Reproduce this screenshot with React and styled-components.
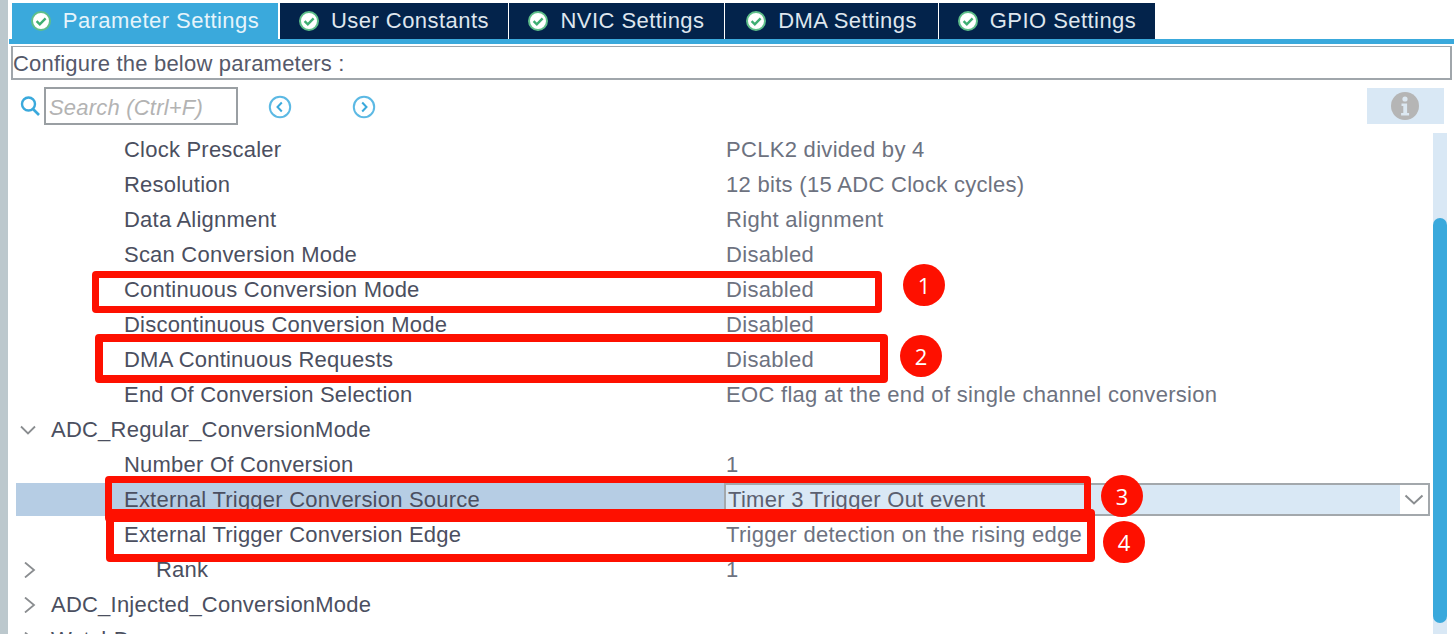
import React from "react";
import styled, { createGlobalStyle } from "styled-components";

const Global = createGlobalStyle`
  html, body { margin: 0; padding: 0; background: #fff; }
  body { font-family: "Liberation Sans", Arial, sans-serif; }
`;

const Page = styled.div`
  position: relative;
  width: 1454px;
  height: 634px;
  overflow: hidden;
  display: flex;
  background: #fff;
`;
const Gutter = styled.div`
  flex: 0 0 8px;
  background: #bcc8cd;
`;
const Main = styled.div`
  flex: 1;
  min-width: 0;
  display: flex;
  flex-direction: column;
  padding-top: 3px;
`;
const TabBar = styled.div`
  display: flex;
  height: 36px;
  padding-left: 4px;
  gap: 1px;
`;
const Tab = styled.div`
  width: ${(p) => p.$w}px;
  margin-right: ${(p) => p.$gap || 0}px;
  display: flex;
  align-items: center;
  justify-content: center;
  gap: 12px;
  box-sizing: border-box;
  background: ${(p) => (p.$active ? "#3aa9dc" : "#03234b")};
  color: ${(p) => (p.$active ? "#e6f4fb" : "#dfe6ee")};
  font-size: 22px;
  letter-spacing: 0.45px;
  white-space: nowrap;
`;
const Strip = styled.div`
  height: 5px;
  margin-left: 1px;
  background: #3aa9dc;
`;
const Configure = styled.div`
  height: 34px;
  margin: 2px 2px 0 3px;
  box-sizing: border-box;
  border: 2px solid #a0a6ab;
  border-top-width: 1px;
  padding: 3px 0 0;
  display: flex;
  align-items: center;
  color: #55596a;
  font-size: 22px;
  letter-spacing: 0.2px;
`;
const Toolbar = styled.div`
  height: 52px;
  display: flex;
  align-items: center;
  padding-left: 12px;
  padding-right: 10px;
`;
const SearchBox = styled.div`
  width: 194px;
  height: 38px;
  margin-left: 4px;
  box-sizing: border-box;
  border: 2px solid #9a9fa3;
  padding: 3px 0 0 3px;
  display: flex;
  align-items: center;
  color: #b3b3b3;
  font-size: 22px;
  font-style: italic;
  letter-spacing: .2px;
`;
const NavButton = styled.span`
  display: flex;
  margin-left: ${(p) => p.$ml}px;
  transform: translateY(1px);
`;
const InfoButton = styled.div`
  margin-left: auto;
  width: 77px;
  height: 36px;
  padding-right: 2px;
  box-sizing: border-box;
  display: flex;
  align-items: center;
  justify-content: center;
  background: #d9e8f5;
`;
const Tree = styled.div`
  position: relative;
  flex: 1;
  min-height: 0;
  padding-left: 8px;
`;
const Row = styled.div`
  height: 35px;
  display: flex;
  align-items: center;
  font-size: 22px;
  letter-spacing: 0.3px;
  white-space: nowrap;
`;
const Label = styled.div`
  flex: 0 0 708px;
  height: ${(p) => (p.$selected ? "33px" : "100%")};
  box-sizing: border-box;
  display: flex;
  align-items: center;
  padding-left: ${(p) => p.$indent}px;
  color: #4b4f60;
  letter-spacing: 0.22px;
  background: ${(p) => (p.$selected ? "#b6cde4" : "transparent")};
`;
const Twisty = styled.span`
  position: absolute;
  left: ${(p) => p.$x}px;
  display: flex;
`;
const Value = styled.div`
  padding-left: 2px;
  color: #6d7280;
`;
const Editor = styled.div`
  flex: 0 0 706px;
  height: 33px;
  box-sizing: border-box;
  border: 2px solid #a3a8ac;
  display: flex;
  align-items: stretch;
  color: #5b6070;
`;
const EditorText = styled.div`
  flex: 1;
  display: flex;
  align-items: center;
  padding-left: 2px;
  background: #d9e8f5;
`;
const EditorCaret = styled.div`
  flex: 0 0 28px;
  display: flex;
  align-items: center;
  justify-content: center;
  background: #fff;
`;
const ScrollTrack = styled.div`
  position: absolute;
  left: 1425px;
  top: 1px;
  bottom: 0;
  width: 14px;
  background: #d9e8f5;
`;
const ScrollThumb = styled.div`
  position: absolute;
  top: 85px;
  left: 0;
  width: 14px;
  height: 405px;
  border-radius: 7px;
  background: #3aa9dc;
`;
const Mark = styled.div`
  position: absolute;
  left: ${(p) => p.$l}px;
  top: ${(p) => p.$t}px;
  width: ${(p) => p.$w}px;
  height: ${(p) => p.$h}px;
  box-sizing: border-box;
  border: ${(p) => p.$s}px solid #fe1000;
  border-radius: 4px;
`;
const Badge = styled.div`
  position: absolute;
  left: ${(p) => p.$x - 21}px;
  top: ${(p) => p.$y - 21}px;
  width: 42px;
  height: 42px;
  border-radius: 50%;
  background: #fe1000;
  color: #fff;
  display: flex;
  align-items: center;
  justify-content: center;
  font-family: "Open Sans", sans-serif;
  font-size: 22px;
`;

const Check = () => (
  <svg width="20" height="20" viewBox="0 0 20 20">
    <circle cx="10" cy="10" r="9" fill="#fff" stroke="#5fbf8a" strokeWidth="2" />
    <path d="M5.6 10.2l3.2 3.2 5.8-6" fill="none" stroke="#3fae72" strokeWidth="2.4" />
  </svg>
);
const Search = () => (
  <svg width="20" height="22" viewBox="0 0 20 22">
    <circle cx="8.5" cy="9" r="6.5" fill="none" stroke="#3aa9dc" strokeWidth="2.4" />
    <path d="M13 14l6 6" stroke="#3aa9dc" strokeWidth="2.6" />
  </svg>
);
const Nav = ({ dir }) => (
  <svg width="24" height="24" viewBox="0 0 24 24">
    <circle cx="12" cy="12" r="10.2" fill="none" stroke="#5cb9e4" strokeWidth="2" />
    <path d={dir === "l" ? "M13.8 7.5L9.5 12l4.3 4.5" : "M10.2 7.5L14.5 12l-4.3 4.5"} fill="none" stroke="#3aa9dc" strokeWidth="2" />
  </svg>
);
const Info = () => (
  <svg width="28" height="28" viewBox="0 0 28 28">
    <circle cx="14" cy="14" r="14" fill="#b5b5b5" />
    <circle cx="14" cy="7" r="2.6" fill="#dce8f2" />
    <path d="M10.5 11.5h5.6V21h2v2.4h-8V21h2.2v-7h-1.8z" fill="#dce8f2" />
  </svg>
);
const Chevron = ({ open }) => (
  <svg width="16" height="16" viewBox="0 0 16 16">
    <path d={open ? "M1 4.5l7 7 7-7" : "M3 .5l9 7.5-9 7.5"} fill="none" stroke="#8a8d90" strokeWidth="1.8" />
  </svg>
);
const Caret = () => (
  <svg width="20" height="11" viewBox="0 0 20 11">
    <path d="M1.5 1.5L10 9.5l8.5-8" fill="none" stroke="#8a8d90" strokeWidth="2" />
  </svg>
);

const tabs = [
  { t: "Parameter Settings", w: 266, active: true, gap: 1 },
  { t: "User Constants", w: 228 },
  { t: "NVIC Settings", w: 215 },
  { t: "DMA Settings", w: 213 },
  { t: "GPIO Settings", w: 216 },
];
const rows = [
  { l: "Clock Prescaler", v: "PCLK2 divided by 4" },
  { l: "Resolution", v: "12 bits (15 ADC Clock cycles)" },
  { l: "Data Alignment", v: "Right alignment" },
  { l: "Scan Conversion Mode", v: "Disabled" },
  { l: "Continuous Conversion Mode", v: "Disabled" },
  { l: "Discontinuous Conversion Mode", v: "Disabled" },
  { l: "DMA Continuous Requests", v: "Disabled" },
  { l: "End Of Conversion Selection", v: "EOC flag at the end of single channel conversion" },
  { l: "ADC_Regular_ConversionMode", group: "open" },
  { l: "Number Of Conversion", v: "1" },
  { l: "External Trigger Conversion Source", v: "Timer 3 Trigger Out event", selected: true },
  { l: "External Trigger Conversion Edge", v: "Trigger detection on the rising edge" },
  { l: "Rank", v: "1", indent: 140, twisty: true },
  { l: "ADC_Injected_ConversionMode", group: "closed" },
  { l: "WatchDog", group: "closed" },
];
const marks = [
  { l: 92, t: 271, w: 790, h: 42, s: 7 },
  { l: 95, t: 334, w: 793, h: 49, s: 8 },
  { l: 105, t: 476, w: 986, h: 46, s: 7 },
  { l: 106, t: 509, w: 989, h: 53, s: 8 },
];
const badges = [
  { x: 924, y: 285, n: 1 },
  { x: 921, y: 356, n: 2 },
  { x: 1122, y: 496, n: 3 },
  { x: 1124, y: 542, n: 4 },
];

export default function App() {
  return (
    <Page>
      <Global />
      <Gutter />
      <Main>
        <TabBar>
          {tabs.map((t) => (
            <Tab key={t.t} $w={t.w} $active={t.active} $gap={t.gap}>
              <Check />
              {t.t}
            </Tab>
          ))}
        </TabBar>
        <Strip />
        <Configure>Configure the below parameters :</Configure>
        <Toolbar>
          <Search />
          <SearchBox>Search (Ctrl+F)</SearchBox>
          <NavButton $ml={30}><Nav dir="l" /></NavButton>
          <NavButton $ml={60}><Nav dir="r" /></NavButton>
          <InfoButton><Info /></InfoButton>
        </Toolbar>
        <Tree>
          {rows.map((r) => (
            <Row key={r.l}>
              {(r.group || r.twisty) && (
                <Twisty $x={r.group === "open" ? 12 : 14}>
                  <Chevron open={r.group === "open"} />
                </Twisty>
              )}
              <Label
                $indent={r.group ? 35 : r.indent || 108}
                $selected={r.selected}
              >
                {r.l}
              </Label>
              {r.selected ? (
                <Editor>
                  <EditorText>{r.v}</EditorText>
                  <EditorCaret><Caret /></EditorCaret>
                </Editor>
              ) : (
                <Value>{r.v}</Value>
              )}
            </Row>
          ))}
          <ScrollTrack>
            <ScrollThumb />
          </ScrollTrack>
        </Tree>
      </Main>
      {marks.map((m) => (
        <Mark key={m.t} $l={m.l} $t={m.t} $w={m.w} $h={m.h} $s={m.s} />
      ))}
      {badges.map((b) => (
        <Badge key={b.n} $x={b.x} $y={b.y}>{b.n}</Badge>
      ))}
    </Page>
  );
}
